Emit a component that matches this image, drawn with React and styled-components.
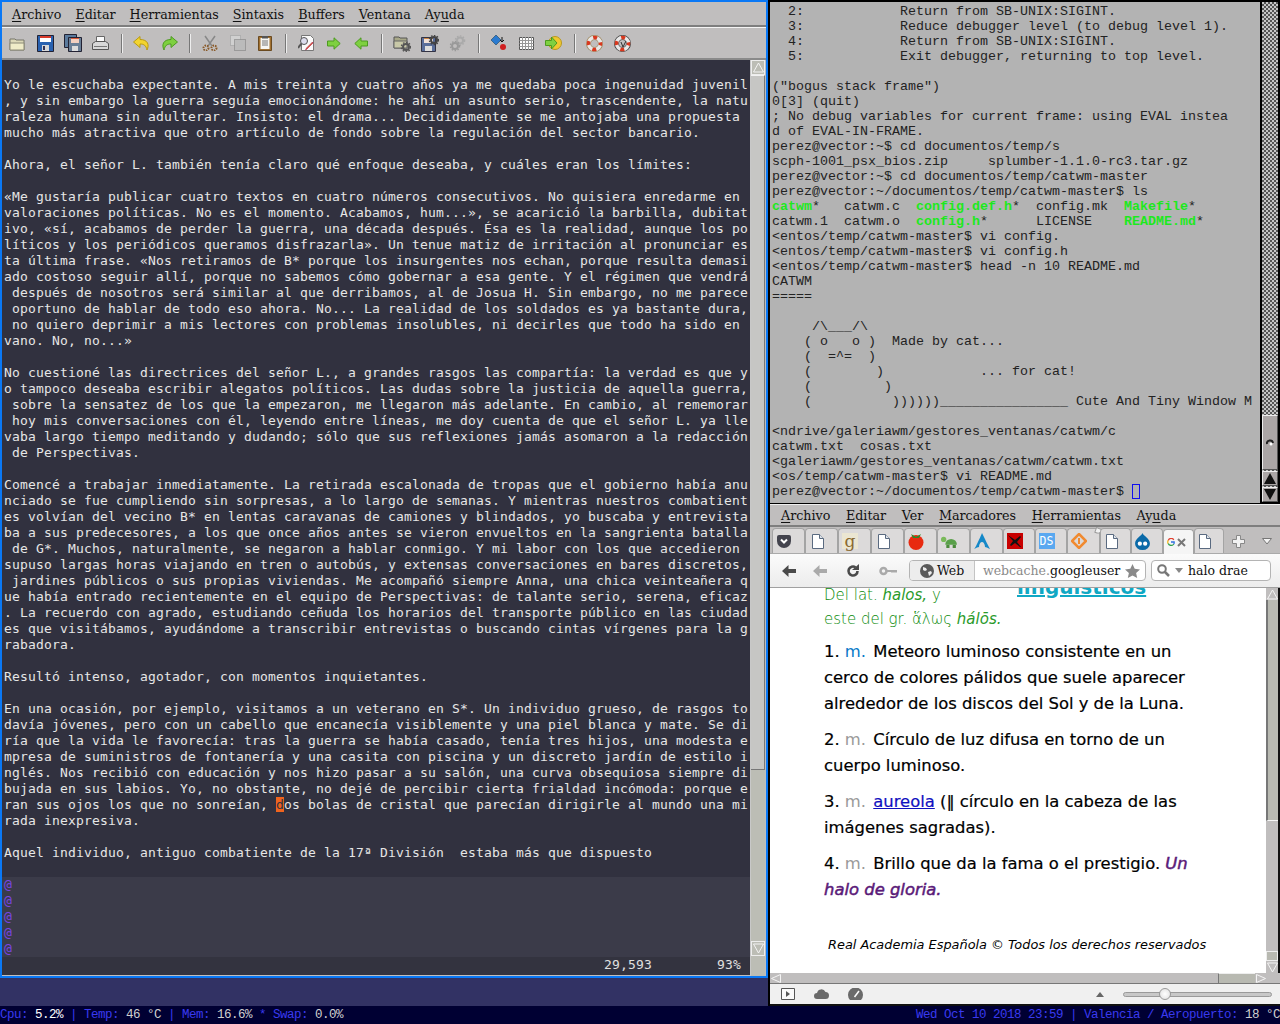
import { Fragment } from 'react'
import styled, { createGlobalStyle } from 'styled-components'

const GlobalStyle = createGlobalStyle`
  html, body { margin: 0; padding: 0; background: #000; }
  * { box-sizing: border-box; }
`

const Page = styled.div`
  width: 1280px;
  height: 1024px;
  overflow: hidden;
  display: flex;
  flex-direction: column;
`
const Desktop = styled.div`
  height: 1006px;
  display: flex;
  background: #000;
`
const LeftCol = styled.div`
  width: 768px;
  display: flex;
  flex-direction: column;
  background: #323264;
`
const RightCol = styled.div`
  width: 510px;
  margin-left: 2px;
  display: flex;
  flex-direction: column;
`

/* ---------- gvim ---------- */
const EditorWindow = styled.div`
  height: 978px;
  border: 2px solid #0a78f5;
  display: flex;
  flex-direction: column;
  background: #c0bebe;
`
const MenuBar = styled.div`
  height: ${p => p.height || 25}px;
  flex: none;
  display: flex;
  align-items: center;
  gap: ${p => p.gap || 14}px;
  padding-left: ${p => p.left || 10}px;
  padding-top: 1px;
  background: #c0bebe;
  border-bottom: 2px solid #7e7e7e;
  font: 12.7px "DejaVu Serif", serif;
  color: #111;
`
const MenuItem = styled.span`
  white-space: pre;
  u { text-underline-offset: 2px; }
`
const ToolBar = styled.div`
  height: 33px;
  flex: none;
  display: flex;
  align-items: center;
  padding-left: 2px;
  background: #c0bebe;
  border-top: 1px solid #f4f4f4;
  border-bottom: 2px solid #8a8a8a;
`
const ToolCell = styled.div`
  width: 27.6px;
  height: 24px;
  flex: none;
  display: flex;
  align-items: center;
  justify-content: center;
`
const ToolSep = styled.div`
  width: 1px;
  height: 19px;
  margin: 0 6.2px;
  flex: none;
  background: #777;
  box-shadow: 1px 0 0 #eee;
`
const EditorBody = styled.div`
  flex: 1;
  min-height: 0;
  display: flex;
`
const TextColumn = styled.div`
  flex: 1;
  display: flex;
  flex-direction: column;
  background: #31313f;
  font: 13px "DejaVu Sans Mono", monospace;
  letter-spacing: 0.174px;
  color: #e6e6e6;
`
const Prose = styled.div`
  flex: 1;
  padding: 17px 0 0 2px;
`
const ProseLine = styled.div`
  height: 16px;
  line-height: 16px;
  white-space: pre;
`
const Cursor = styled.span`
  background: #f0641e;
  color: #31313f;
`
const Tildes = styled.div`
  height: 80px;
  flex: none;
  padding-left: 2px;
  background: #3b3b49;
  color: #7a46e0;
`
const VimStatus = styled.div`
  height: 19px;
  flex: none;
  display: flex;
  background: #33333f;
  border-bottom: 1px solid #c0bebe;
  line-height: 15px;
  white-space: pre;
  color: #e0e0e0;
`
const StatusPos = styled.span`
  margin-left: ${p => p.left}px;
`
const EditorScroll = styled.div`
  width: 15px;
  flex: none;
  margin-right: 1px;
  display: flex;
  flex-direction: column;
  background: #bcbdb5;
  border-left: 1px solid #c8c8c8;
  padding-bottom: 20px;
`
const ScrollThumb = styled.div`
  height: ${p => p.height}px;
  flex: none;
  background: #c6c6c4;
  border-right: 1px solid #777;
  border-bottom: 1px solid #777;
  border-top: 1px solid #f2f2f2;
`
const ArrowButton = styled.div`
  height: 15px;
  flex: none;
  display: flex;
  align-items: center;
  justify-content: center;
  background: #bcbdb5;
  border: 1px solid #ededed;
`
const Spacer = styled.div`
  flex: 1;
`

/* ---------- xterm ---------- */
const Terminal = styled.div`
  height: 503px;
  flex: none;
  display: flex;
  background: #000;
`
const TermText = styled.div`
  width: 490px;
  height: 501px;
  margin-top: 2px;
  flex: none;
  padding: 2px 0 0 2px;
  background: #b3b3b3;
  font: 13.33px "Liberation Mono", monospace;
  color: #222;
  overflow: hidden;
`
const TermLine = styled.div`
  height: 15px;
  line-height: 15px;
  white-space: pre;
`
const Exec = styled.b`
  color: #1de81d;
`
const TermCursor = styled.span`
  display: inline-block;
  width: 8px;
  height: 15px;
  vertical-align: top;
  border: 1px solid #1010f0;
`
const TermScroll = styled.div`
  width: 16px;
  margin: 2px 0 1px 2px;
  flex: none;
  display: flex;
  flex-direction: column;
  gap: 1px;
  background: repeating-conic-gradient(#555 0 25%, #c6c6c6 0 50%) 0 0 / 4px 4px;
`
const TermThumb = styled.div`
  height: 55px;
  margin-top: auto;
  flex: none;
  display: flex;
  align-items: center;
  justify-content: center;
  background: #aba6a6;
  border: 1px solid #eee;
  border-right-color: #555;
  border-bottom-color: #555;
`
const TermArrow = styled.div`
  height: 15px;
  flex: none;
  display: flex;
  align-items: center;
  justify-content: center;
  background: #aba6a6;
  border: 1px solid #eee;
  border-right-color: #555;
  border-bottom-color: #555;
`

/* ---------- browser ---------- */
const Browser = styled.div`
  height: 502px;
  margin-top: 1px;
  flex: none;
  display: flex;
  flex-direction: column;
  border-top: 1px solid #eee;
  border-bottom: 2px solid #111;
  background: #f0f0f0;
`
const TabStrip = styled.div`
  height: 27px;
  flex: none;
  padding: 1px 0 0 2px;
  display: flex;
  align-items: flex-end;
  background: #c0bebe;
  border-bottom: 1px solid #aaa;
`
const Tab = styled.div`
  position: relative;
  width: ${p => p.width || 33}px;
  height: 25px;
  flex: none;
  display: flex;
  align-items: center;
  justify-content: center;
  gap: 2px;
  padding-right: ${p => (p.active ? 4 : 9)}px;
  background: ${p => (p.active ? '#f5f5f5' : '#dcdada')};
  border: 1px solid #a4a4a4;
  border-bottom: none;
  border-radius: 4px 4px 0 0;
  margin-bottom: ${p => (p.active ? -1 : 0)}px;
  z-index: ${p => (p.active ? 1 : 0)};
`
const TabCurl = styled.span`
  position: absolute;
  top: -1px;
  right: -3px;
  width: 7px;
  height: 6px;
  background: #f2f2f2;
  border: 1px solid #999;
  border-radius: 0 0 5px 0;
  transform: rotate(20deg);
`
const TabTools = styled.div`
  flex: 1;
  display: flex;
  align-items: center;
  justify-content: space-between;
  padding: 2px 8px 0 8px;
  height: 25px;
`
const NavBar = styled.div`
  height: 34px;
  flex: none;
  display: flex;
  align-items: center;
  padding-left: 12px;
  background: linear-gradient(#fbfbfb, #ececec);
  border-bottom: 1px solid #a0a0a0;
`
const NavButton = styled.div`
  width: ${p => p.width || 31}px;
  flex: none;
  display: flex;
  justify-content: flex-start;
`
const UrlBar = styled.div`
  width: 237px;
  height: 21px;
  margin-left: 6px;
  flex: none;
  display: flex;
  align-items: center;
  background: #fff;
  border: 1px solid #b4b4b4;
  border-radius: 4px;
  font: 12.5px "DejaVu Serif", serif;
  color: #111;
  white-space: nowrap;
  overflow: hidden;
`
const Identity = styled.div`
  width: 65px;
  height: 100%;
  flex: none;
  display: flex;
  align-items: center;
  gap: 3px;
  padding-left: 10px;
  background: #ededed;
  border-right: 1px solid #c4c4c4;
`
const UrlText = styled.div`
  flex: 1;
  padding-left: 8px;
  overflow: hidden;
  span { color: #8a8a8a; }
`
const StarSlot = styled.div`
  flex: none;
  display: flex;
  margin-right: 5px;
`
const SearchBar = styled(UrlBar)`
  width: 120px;
  margin-left: 5px;
  padding-left: 5px;
  gap: 5px;
`
const Viewport = styled.div`
  flex: 1;
  min-height: 0;
  display: flex;
  background: #fff;
`
const ArticlePane = styled.div`
  flex: 1;
  overflow: hidden;
  padding-left: 54px;
  font: 16.4px/26px "DejaVu Sans", sans-serif;
  color: #000;
`
const Etymology = styled.div`
  display: flex;
  height: 50px;
  margin-top: -5px;
  margin-bottom: 6px;
  font-size: 15px;
  color: #0a8a0a;
  font-weight: 200;
  line-height: 24px;
  i { font-weight: 400; color: #2a9a2a; }
`
const EtymText = styled.div`
  width: 193px;
  flex: none;
  white-space: nowrap;
`
const ClippedTitle = styled.div`
  margin-top: -8px;
  font: bold 20px/24px "DejaVu Sans", sans-serif;
  color: #10a8c4;
  text-decoration: underline;
  height: 24px;
`
const Definition = styled.div`
  width: 372px;
  margin-bottom: 10px;
  white-space: nowrap;
  -webkit-text-stroke: 0.2px;
`
const Abbr = styled.span`
  margin-right: 2px;
  color: ${p => p.color};
  -webkit-text-stroke: 0;
`
const Sample = styled.span`
  color: #5a1a78;
  font-style: italic;
  -webkit-text-stroke: 0.5px;
`
const Entry = styled.a`
  color: #1010c0;
  text-decoration: underline;
`
const Copyright = styled.div`
  margin: 32px 0 0 4px;
  font: italic 12.9px/20px "DejaVu Sans", sans-serif;
  white-space: nowrap;
`
const PageScroll = styled.div`
  width: 14px;
  flex: none;
  display: flex;
  flex-direction: column;
  background: #c0bebe;
  border-right: 2px solid #111;
`
const PageArrow = styled.div`
  height: 12px;
  flex: none;
  display: flex;
  align-items: center;
  justify-content: center;
`
const PageThumb = styled.div`
  height: 221px;
  flex: none;
  background: #b8b9b1;
  border-left: 2px solid #777;
  border-bottom: 1px solid #f6f6f6;
`
const EndBox = styled.div`
  height: 10px;
  flex: none;
  background: #b8b9b1;
  border: 1px solid #eee;
`
const HScroll = styled.div`
  height: 11px;
  flex: none;
  display: flex;
  background: #c0bebe;
  border-bottom: 1px solid #777;
`
const HThumb = styled.div`
  width: 37px;
  flex: none;
  margin-left: auto;
  background: #b8b9b1;
  border-left: 1px solid #777;
  border-top: 1px solid #eee;
`
const HArrow = styled.div`
  width: ${p => p.width || 12}px;
  flex: none;
  display: flex;
  align-items: center;
  justify-content: center;
`
const AddonBar = styled.div`
  height: 20px;
  flex: none;
  display: flex;
  align-items: center;
  padding: 0 8px 0 11px;
  background: #f0f0f0;
  gap: 19px;
`
const Slider = styled.div`
  position: relative;
  width: 149px;
  height: 5px;
  background: #c8c8c8;
  border: 1px solid #9a9a9a;
  border-radius: 3px;
`
const Knob = styled.div`
  position: absolute;
  left: 35px;
  top: -5px;
  width: 12px;
  height: 12px;
  border-radius: 50%;
  background: radial-gradient(#fff, #ddd);
  border: 1px solid #999;
`

/* ---------- panel ---------- */
const Panel = styled.div`
  height: 18px;
  flex: none;
  display: flex;
  justify-content: space-between;
  background: #000033;
  font: 12.5px/18px "Liberation Mono", monospace;
  letter-spacing: -0.5px;
  white-space: pre;
  color: #3a3af0;
`
const Val = styled.span`
  color: ${p => p.color || '#d0d0d0'};
`

/* ---------- icons ---------- */
const Open = () => (
  <svg width="17" height="15" viewBox="0 0 17 15"><path d="M1 3h5l1 1h8v10H1z" fill="#dcd9b8" stroke="#77766a" /><path d="M1 7h14v7H1z" fill="#efecc8" stroke="#8c8a78" /></svg>
)
const Floppy = ({ fill = '#2a62b0' }) => (
  <svg width="17" height="17" viewBox="0 0 17 17"><path d="M.5.5h16v16H.5z" fill={fill} stroke="#223" /><path d="M3 1h11v6H3z" fill="#fff" /><path d="M3 1h11v2H3z" fill="#d83a2a" /><path d="M5 10h7v6H5z" fill="#d8d8d8" /><path d="M6 11h2v4H6z" fill="#335" /></svg>
)
const SaveAll = () => (
  <svg width="18" height="18" viewBox="0 0 18 18"><path d="M.5.5h12v13H.5z" fill="#5a7a9c" stroke="#223" /><path d="M4.500 3.500h13v14h-13z" fill="#6a7f96" stroke="#223" /><path d="M7 4h8v5H7z" fill="#f2d0c0" /><path d="M7 4h8v1H7z" fill="#d85a3a" /><path d="M8 12h6v5H8z" fill="#ddd" /></svg>
)
const Printer = () => (
  <svg width="17" height="15" viewBox="0 0 17 15"><path d="M4.500.5h8v6h-8z" fill="#fafafa" stroke="#666" /><path d="M.5 7.500l3-2h10l3 2v6h-16z" fill="#d8d8d8" stroke="#555" /><path d="M2 10h13v1H2z" fill="#777" /></svg>
)
const Curved = ({ fill, stroke, flip }) => (
  <svg width="17" height="15" viewBox="0 0 17 15" style={flip ? { transform: 'scaleX(-1)' } : undefined}><path d="M7 .5L.5 6 7 11.500V8c4 0 6 1.500 7 6 2.500-5 1-10.500-7-10.500z" fill={fill} stroke={stroke} /></svg>
)
const Scissors = () => (
  <svg width="16" height="16" viewBox="0 0 16 16"><path d="M3 1l7 10M13 1L6 11" stroke="#888" strokeWidth="1.500" /><circle cx="4" cy="13" r="2.500" fill="none" stroke="#8a5a28" strokeWidth="2" strokeDasharray="1.500 1" /><circle cx="12" cy="13" r="2.500" fill="none" stroke="#8a5a28" strokeWidth="2" strokeDasharray="1.500 1" /></svg>
)
const Copy = () => (
  <svg width="16" height="16" viewBox="0 0 16 16"><path d="M.5.500h10v10h-10z" fill="#d0d0d0" stroke="#999" strokeDasharray="1 1" /><path d="M4.500 4.500h11v11h-11z" fill="#bbb" stroke="#777" strokeDasharray="1 1" /></svg>
)
const Paste = () => (
  <svg width="14" height="16" viewBox="0 0 14 16"><path d="M.5 1.500h13v14H.5z" fill="#a07030" stroke="#6a4a20" /><path d="M2.500 3h9v11h-9z" fill="#f6f6f2" /><path d="M4 1h6v2.500H4z" fill="#555" /><path d="M4 6h6M4 8h6M4 10h6" stroke="#777" /></svg>
)
const FindReplace = () => (
  <svg width="16" height="16" viewBox="0 0 16 16"><path d="M3.500.5h9l3 3v12h-12z" fill="#fafafa" stroke="#777" /><circle cx="6" cy="6" r="3.500" fill="#dde" stroke="#555" /><path d="M3.500 8.500L0 13" stroke="#555" strokeWidth="2" /><path d="M15 8l-6 6-1.500 1 1-2 6-6z" fill="#d8682a" stroke="#a04" strokeWidth=".5" /></svg>
)
const Arrow = ({ left }) => (
  <svg width="14" height="13" viewBox="0 0 14 13" style={left ? { transform: 'scaleX(-1)' } : undefined}><path d="M.5 4h6.500V.8l6.200 5.700-6.200 5.700V9H.5z" fill="#7ed040" stroke="#4c9a20" /></svg>
)
const GearMark = ({ x, y, c = '#555' }) => (
  <g transform={`translate(${x} ${y})`}><circle r="3" fill="none" stroke={c} strokeWidth="2" /><circle r="4.600" fill="none" stroke={c} strokeWidth="1.400" strokeDasharray="1.500 1.500" /></g>
)
const FolderGear = () => (
  <svg width="18" height="17" viewBox="0 0 18 17"><path d="M1 2h5l1 1h7v10H1z" fill="#a8a888" stroke="#555" /><path d="M1 6h13v7H1z" fill="#c8c8a8" stroke="#666" /><GearMark x={13} y={12} /></svg>
)
const FloppyGear = () => (
  <svg width="18" height="17" viewBox="0 0 18 17"><path d="M.5 2.500h14v14H.5z" fill="#5a6e9a" stroke="#334" /><path d="M3 3h9v5H3z" fill="#f0e0d8" /><path d="M3 3h9v1H3z" fill="#c84" /><path d="M4 11h7v5H4z" fill="#ddd" /><GearMark x={13} y={5} c="#444" /></svg>
)
const Gears = () => (
  <svg width="17" height="17" viewBox="0 0 17 17"><GearMark x={11} y={5.500} c="#aaa" /><GearMark x={6} y={11} c="#999" /></svg>
)
const MakeIcon = () => (
  <svg width="16" height="16" viewBox="0 0 16 16"><path d="M5 0l5 5-5 5-5-5z" fill="#2a7ad0" stroke="#134" strokeWidth=".5" /><path d="M11 2v5M9 5l2 2 2-2" stroke="#111" fill="none" /><circle cx="12" cy="12" r="3" fill="#d02020" /></svg>
)
const Grid = () => (
  <svg width="15" height="13" viewBox="0 0 15 13"><path d="M.5.500h14v12H.5z" fill="#fff" stroke="#555" /><path d="M.5 3.500h14M.5 6.500h14M.5 9.500h14M3.500 0v13M6.500 0v13M9.500 0v13M12.500 0v13" stroke="#999" /></svg>
)
const Goto = () => (
  <svg width="17" height="14" viewBox="0 0 17 14"><circle cx="10" cy="7" r="6.500" fill="#f0c830" stroke="#b89820" /><path d="M.5 4.500h6V1l5.500 6-5.500 6V9.500h-6z" fill="#7ed040" stroke="#4c9a20" /></svg>
)
const Buoy = ({ help }) => (
  <svg width="17" height="17" viewBox="0 0 17 17"><circle cx="8.500" cy="8.500" r="6" fill="none" stroke={help ? '#444' : '#a08a60'} strokeWidth="5" /><circle cx="8.500" cy="8.500" r="6" fill="none" stroke="#e8e8e8" strokeWidth="3.500" /><circle cx="8.500" cy="8.500" r="6" fill="none" stroke="#d8381e" strokeWidth="3.500" strokeDasharray="4 5.400" strokeDashoffset="2" />{help && <path d="M7 7l2 5 3-6" stroke="#333" fill="none" />}</svg>
)
const ArrowUpOutline = ({ down }) => (
  <svg width="11" height="11" viewBox="0 0 11 11" style={down ? { transform: 'scaleY(-1)' } : undefined}><path d="M5.500 1L.5 10h10z" fill="none" stroke="#f4f4f4" /></svg>
)
const ArrowSide = ({ right }) => (
  <svg width="10" height="9" viewBox="0 0 10 9" style={right ? { transform: 'scaleX(-1)' } : undefined}><path d="M.5 4.500L9.500.5v8z" fill="none" stroke="#f4f4f4" /></svg>
)
const BlackArrow = ({ down }) => (
  <svg width="12" height="11" viewBox="0 0 12 11" style={down ? { transform: 'scaleY(-1)' } : undefined}><path d="M6 0l6 11H0z" fill="#111" /></svg>
)
const PageIcon = () => (
  <svg width="13" height="15" viewBox="0 0 13 15"><path d="M1.500.5h7l4 4v10h-11z" fill="#fff" stroke="#5a6a80" /><path d="M8.500.5v4h4" fill="#dfe4ea" stroke="#5a6a80" /></svg>
)
const Pocket = () => (
  <svg width="14" height="13" viewBox="0 0 14 13"><path d="M0 2a2 2 0 012-2h10a2 2 0 012 2v4a7 7 0 01-14 0z" fill="#44444e" /><path d="M4 4.500l3 3 3-3" stroke="#fff" strokeWidth="2" fill="none" /></svg>
)
const Square = styled.div`
  width: ${p => p.size || 16}px;
  height: ${p => p.size || 16}px;
  display: flex;
  align-items: center;
  justify-content: center;
  background: ${p => p.bg};
  color: ${p => p.color || '#fff'};
  font: ${p => p.font || '13px "DejaVu Sans", sans-serif'};
`
const Tomato = () => (
  <svg width="16" height="17" viewBox="0 0 16 17"><circle cx="8" cy="9.500" r="7.500" fill="#e82a10" /><path d="M3 1l5 3 5-3-2 4H5z" fill="#2a8a2a" /></svg>
)
const Turtle = () => (
  <svg width="17" height="14" viewBox="0 0 16 13"><path d="M4 10a5.500 5.500 0 0111 0z" fill="#5aa04a" /><circle cx="2.500" cy="5" r="2.500" fill="#7aba5a" /><path d="M5 10h3v3H5zM11 10h3v3h-3z" fill="#4a8a3a" /></svg>
)
const ArchLogo = () => (
  <svg width="16" height="16" viewBox="0 0 16 16"><path d="M8 0C6.800 3 5.500 6 2.500 12 .8 15.500.3 16 0 16c2.500-1.300 4-2 5-2 0-3 1.500-5 3-5s3 2 3 5c1 0 2.500.7 5 2-2-3.500-5-10-8-16z" fill="#1588c8" /></svg>
)
const Plane = () => (
  <Square bg="#c80000"><svg width="15" height="14" viewBox="0 0 15 14"><path d="M1 1l7 5 5-4 1 1-4 5 4 5-1 0-5-4-4 3-1-1 3-4z" fill="#111" /></svg></Square>
)
const Diamond = () => (
  <svg width="16" height="16" viewBox="0 0 16 16"><path d="M8 1l7 7-7 7-7-7z" fill="none" stroke="#f08a30" strokeWidth="2.500" /><path d="M8 5v6" stroke="#f08a30" strokeWidth="2" /></svg>
)
const Drupal = () => (
  <svg width="15" height="17" viewBox="0 0 14 16"><path d="M7 0c1 3 7 5 7 10a7 6 0 01-14 0C0 5 6 3 7 0z" fill="#0a6aa8" /><circle cx="4.500" cy="10" r="2" fill="#fff" /><circle cx="9.500" cy="10" r="2" fill="#fff" /></svg>
)
const GoogleG = () => (
  <svg width="8" height="8" viewBox="0 0 10 10"><path d="M8.500 2.200A4 4 0 001.500 3" fill="none" stroke="#e04030" strokeWidth="1.600" /><path d="M1.500 3a4 4 0 000 4" fill="none" stroke="#f0b820" strokeWidth="1.600" /><path d="M1.500 7a4 4 0 007 .5" fill="none" stroke="#30a050" strokeWidth="1.600" /><path d="M8.500 7.500A4 4 0 009 5H5" fill="none" stroke="#3070e0" strokeWidth="1.600" /></svg>
)
const CloseX = () => (
  <svg width="9" height="9" viewBox="0 0 9 9"><path d="M1 1l7 7M8 1L1 8" stroke="#777" strokeWidth="2" /></svg>
)
const Plus = () => (
  <svg width="13" height="13" viewBox="0 0 13 13"><path d="M4.500.5h4v4h4v4h-4v4h-4v-4h-4v-4h4z" fill="#f2f2f2" stroke="#888" /></svg>
)
const Chevron = () => (
  <svg width="10" height="7" viewBox="0 0 10 7"><path d="M.5.500h9L5 6z" fill="#f2f2f2" stroke="#777" /></svg>
)
const Back = ({ fill = '#4a4a4a' }) => (
  <svg width="14" height="12" viewBox="0 0 14 12"><path d="M6.500 0L0 6l6.500 6V8H14V4H6.500z" fill={fill} /></svg>
)
const Reload = () => (
  <svg width="14" height="14" viewBox="0 0 14 14"><path d="M11.500 7a4.500 4.500 0 11-2-3.700" fill="none" stroke="#4a4a4a" strokeWidth="2.600" /><path d="M6 6h7V0z" fill="#4a4a4a" /></svg>
)
const KeyIcon = () => (
  <svg width="18" height="10" viewBox="0 0 18 10"><circle cx="4.500" cy="5" r="3" fill="none" stroke="#aaa" strokeWidth="2.500" /><path d="M8 4h10v2l-1 1-1-1-1 1-1-1-1 1-1-1H8z" fill="#aaa" /></svg>
)
const Globe = () => (
  <svg width="14" height="14" viewBox="0 0 14 14"><circle cx="7" cy="7" r="7" fill="#5a5a5a" /><path d="M3 3l3 1 1 2-2 1-2-1zM8 8l3-1 1 2-3 3z" fill="#eee" /></svg>
)
const Star = () => (
  <svg width="15" height="14" viewBox="0 0 15 14"><path d="M7.500 0l2.200 4.800 5.300.6-3.900 3.500 1.100 5.100-4.700-2.600L2.800 14l1.100-5.100L0 5.400l5.300-.6z" fill="#8a8a8a" /></svg>
)
const Lens = () => (
  <svg width="13" height="13" viewBox="0 0 13 13"><circle cx="5" cy="5" r="3.800" fill="none" stroke="#777" strokeWidth="2" /><path d="M8 8l4 4" stroke="#777" strokeWidth="2.500" /></svg>
)
const Caret = ({ fill = '#888', up }) => (
  <svg width="8" height="5" viewBox="0 0 8 5" style={up ? { transform: 'scaleY(-1)' } : undefined}><path d="M0 0h8L4 5z" fill={fill} /></svg>
)
const PanelBox = () => (
  <svg width="14" height="12" viewBox="0 0 14 12"><path d="M.5.500h13v11H.5z" fill="#fafafa" stroke="#555" /><path d="M5 3l4 3-4 3z" fill="#555" /></svg>
)
const Cloud = () => (
  <svg width="15" height="10" viewBox="0 0 15 10"><path d="M3 10a3 3 0 010-6 4.500 4.500 0 018.500-1 3.500 3.500 0 010 7z" fill="#6a6a6a" /></svg>
)
const Gauge = () => (
  <svg width="15" height="12" viewBox="0 0 15 12"><path d="M2 12A7.500 7.500 0 1113 12z" fill="#6a6a6a" /><path d="M6.500 9L11 3" stroke="#fafafa" strokeWidth="1.500" /></svg>
)
const Spiral = () => (
  <svg width="8" height="8" viewBox="0 0 8 8"><path d="M1 5a3 3 0 016-1" fill="none" stroke="#222" strokeWidth="2" /><circle cx="5" cy="5" r="1.500" fill="#fff" /></svg>
)

/* ---------- content ---------- */
const proseLines = [
  'Yo le escuchaba expectante. A mis treinta y cuatro años ya me quedaba poca ingenuidad juvenil',
  ', y sin embargo la guerra seguía emocionándome: he ahí un asunto serio, trascendente, la natu',
  'raleza humana sin adulterar. Insisto: el drama... Decididamente se me antojaba una propuesta',
  'mucho más atractiva que otro artículo de fondo sobre la regulación del sector bancario.',
  '',
  'Ahora, el señor L. también tenía claro qué enfoque deseaba, y cuáles eran los límites:',
  '',
  '«Me gustaría publicar cuatro textos en cuatro números consecutivos. No quisiera enredarme en',
  'valoraciones políticas. No es el momento. Acabamos, hum...», se acarició la barbilla, dubitat',
  'ivo, «sí, acabamos de perder la guerra, una década después. Ésa es la realidad, aunque los po',
  'líticos y los periódicos queramos disfrazarla». Un tenue matiz de irritación al pronunciar es',
  'ta última frase. «Nos retiramos de B* porque los insurgentes nos echan, porque resulta demasi',
  'ado costoso seguir allí, porque no sabemos cómo gobernar a esa gente. Y el régimen que vendrá',
  ' después de nosotros será similar al que derribamos, al de Josua H. Sin embargo, no me parece',
  ' oportuno de hablar de todo eso ahora. No... La realidad de los soldados es ya bastante dura,',
  ' no quiero deprimir a mis lectores con problemas insolubles, ni decirles que todo ha sido en',
  'vano. No, no...»',
  '',
  'No cuestioné las directrices del señor L., a grandes rasgos las compartía: la verdad es que y',
  'o tampoco deseaba escribir alegatos políticos. Las dudas sobre la justicia de aquella guerra,',
  ' sobre la sensatez de los que la empezaron, me llegaron más adelante. En cambio, al rememorar',
  ' hoy mis conversaciones con él, leyendo entre líneas, me doy cuenta de que el señor L. ya lle',
  'vaba largo tiempo meditando y dudando; sólo que sus reflexiones jamás asomaron a la redacción',
  ' de Perspectivas.',
  '',
  'Comencé a trabajar inmediatamente. La retirada escalonada de tropas que el gobierno había anu',
  'nciado se fue cumpliendo sin sorpresas, a lo largo de semanas. Y mientras nuestros combatient',
  'es volvían del vecino B* en lentas caravanas de camiones y blindados, yo buscaba y entrevista',
  'ba a sus predecesores, a los que once años antes se vieron envueltos en la sangrienta batalla',
  ' de G*. Muchos, naturalmente, se negaron a hablar conmigo. Y mi labor con los que accedieron',
  'supuso largas horas viajando en tren o autobús, y extensas conversaciones en bares discretos,',
  ' jardines públicos o sus propias viviendas. Me acompañó siempre Anna, una chica veinteañera q',
  'ue había entrado recientemente en el equipo de Perspectivas: de talante serio, serena, eficaz',
  '. La recuerdo con agrado, estudiando ceñuda los horarios del transporte público en las ciudad',
  'es que visitábamos, ayudándome a transcribir entrevistas o buscando cintas vírgenes para la g',
  'rabadora.',
  '',
  'Resultó intenso, agotador, con momentos inquietantes.',
  '',
  'En una ocasión, por ejemplo, visitamos a un veterano en S*. Un individuo grueso, de rasgos to',
  'davía jóvenes, pero con un cabello que encanecía visiblemente y una piel blanca y mate. Se di',
  'ría que la vida le favorecía: tras la guerra se había casado, tenía tres hijos, una modesta e',
  'mpresa de suministros de fontanería y una casita con piscina y un discreto jardín de estilo i',
  'nglés. Nos recibió con educación y nos hizo pasar a su salón, una curva obsequiosa siempre di',
  'bujada en sus labios. Yo, no obstante, no dejé de percibir cierta frialdad incómoda: porque e',
]

const termTop = [
  '  2:            Return from SB-UNIX:SIGINT.',
  '  3:            Reduce debugger level (to debug level 1).',
  '  4:            Return from SB-UNIX:SIGINT.',
  '  5:            Exit debugger, returning to top level.',
  '',
  '("bogus stack frame")',
  '0[3] (quit)',
  '; No debug variables for current frame: using EVAL instea',
  'd of EVAL-IN-FRAME.',
  'perez@vector:~$ cd documentos/temp/s',
  'scph-1001_psx_bios.zip     splumber-1.1.0-rc3.tar.gz',
  'perez@vector:~$ cd documentos/temp/catwm-master',
  'perez@vector:~/documentos/temp/catwm-master$ ls',
]
const termBottom = [
  '<entos/temp/catwm-master$ vi config.',
  '<entos/temp/catwm-master$ vi config.h',
  '<entos/temp/catwm-master$ head -n 10 README.md',
  'CATWM',
  '=====',
  '',
  '     /\\___/\\',
  '    ( o   o )  Made by cat...',
  '    (  =^=  )',
  '    (        )            ... for cat!',
  '    (         )',
  '    (          ))))))________________ Cute And Tiny Window M',
  '',
  '<ndrive/galeriawm/gestores_ventanas/catwm/c',
  'catwm.txt  cosas.txt',
  '<galeriawm/gestores_ventanas/catwm/catwm.txt',
  '<os/temp/catwm-master$ vi README.md',
]

const Menu = ({ items }) => items.map(([key, rest, before = '']) => (
  <MenuItem key={key + rest}>{before}<u>{key}</u>{rest}</MenuItem>
))

const toolGroups = [
  [<Open />, <Floppy />, <SaveAll />, <Printer />],
  [<Curved fill="#f2d430" stroke="#b89a10" />, <Curved fill="#7ed040" stroke="#4c9a20" flip />],
  [<Scissors />, <Copy />, <Paste />],
  [<FindReplace />, <Arrow />, <Arrow left />],
  [<FolderGear />, <FloppyGear />, <Gears />],
  [<MakeIcon />, <Grid />, <Goto />],
  [<Buoy />, <Buoy help />],
]

const App = () => (
  <Page>
    <GlobalStyle />
    <Desktop>
      <LeftCol>
        <EditorWindow>
          <MenuBar>
            <Menu items={[['A', 'rchivo'], ['E', 'ditar'], ['H', 'erramientas'], ['S', 'intaxis'], ['B', 'uffers'], ['V', 'entana'], ['u', 'da', 'Ay']]} />
          </MenuBar>
          <ToolBar>
            {toolGroups.map((group, i) => (
              <Fragment key={i}>
                {i > 0 && <ToolSep />}
                {group.map((icon, j) => <ToolCell key={j}>{icon}</ToolCell>)}
              </Fragment>
            ))}
          </ToolBar>
          <EditorBody>
            <TextColumn>
              <Prose>
                {proseLines.map((line, i) => <ProseLine key={i}>{line}</ProseLine>)}
                <ProseLine>ran sus ojos los que no sonreían, <Cursor>d</Cursor>os bolas de cristal que parecían dirigirle al mundo una mi</ProseLine>
                <ProseLine>rada inexpresiva.</ProseLine>
                <ProseLine />
                <ProseLine>Aquel individuo, antiguo combatiente de la 17ª División  estaba más que dispuesto</ProseLine>
              </Prose>
              <Tildes>
                {[0, 1, 2, 3, 4].map(i => <ProseLine key={i}>@</ProseLine>)}
              </Tildes>
              <VimStatus>
                <StatusPos left={602}>29,593</StatusPos>
                <StatusPos left={65}>93%</StatusPos>
              </VimStatus>
            </TextColumn>
            <EditorScroll>
              <ArrowButton><ArrowUpOutline /></ArrowButton>
              <ScrollThumb height={695} />
              <Spacer />
              <ArrowButton><ArrowUpOutline down /></ArrowButton>
            </EditorScroll>
          </EditorBody>
        </EditorWindow>
      </LeftCol>
      <RightCol>
        <Terminal>
          <TermText>
            {termTop.map((line, i) => <TermLine key={i}>{line}</TermLine>)}
            <TermLine><Exec>catwm</Exec>*   catwm.c  <Exec>config.def.h</Exec>*  config.mk  <Exec>Makefile</Exec>*</TermLine>
            <TermLine>catwm.1  catwm.o  <Exec>config.h</Exec>*      LICENSE    <Exec>README.md</Exec>*</TermLine>
            {termBottom.map((line, i) => <TermLine key={i}>{line}</TermLine>)}
            <TermLine>perez@vector:~/documentos/temp/catwm-master$ <TermCursor /></TermLine>
          </TermText>
          <TermScroll>
            <TermThumb><Spiral /></TermThumb>
            <TermArrow><BlackArrow /></TermArrow>
            <TermArrow><BlackArrow down /></TermArrow>
          </TermScroll>
        </Terminal>
        <Browser>
          <MenuBar left={11} height={22} gap={15.6}>
            <Menu items={[['A', 'rchivo'], ['E', 'ditar'], ['V', 'er'], ['M', 'arcadores'], ['H', 'erramientas'], ['u', 'da', 'Ay']]} />
          </MenuBar>
          <TabStrip>
            <Tab><Pocket /></Tab>
            <Tab><PageIcon /></Tab>
            <Tab><Square bg="#ebe6d2" color="#8a6a30" font='17px "DejaVu Serif", serif'>g</Square></Tab>
            <Tab><PageIcon /></Tab>
            <Tab><Tomato /></Tab>
            <Tab><Turtle /></Tab>
            <Tab><ArchLogo /></Tab>
            <Tab width={32}><Plane /></Tab>
            <Tab width={32}><Square bg="#5aa8f0" font='11.500px "DejaVu Sans Mono", monospace'>DS</Square></Tab>
            <Tab><Diamond /><TabCurl /></Tab>
            <Tab width={31}><PageIcon /></Tab>
            <Tab width={32}><Drupal /></Tab>
            <Tab active width={31}><GoogleG /><CloseX /></Tab>
            <Tab width={30}><PageIcon /></Tab>
            <TabTools><Plus /><Chevron /></TabTools>
          </TabStrip>
          <NavBar>
            <NavButton><Back /></NavButton>
            <NavButton width={33}><Back fill="#aaa" /></NavButton>
            <NavButton width={33}><Reload /></NavButton>
            <NavButton width={24}><KeyIcon /></NavButton>
            <UrlBar>
              <Identity><Globe />Web</Identity>
              <UrlText><span>webcache.</span>googleuser</UrlText>
              <StarSlot><Star /></StarSlot>
            </UrlBar>
            <SearchBar><Lens /><Caret />halo drae</SearchBar>
          </NavBar>
          <Viewport>
            <ArticlePane>
              <Etymology>
                <EtymText>
                  Del lat. <i>halos,</i> y<br />
                  este del gr. ἅλως <i>hálōs.</i>
                </EtymText>
                <ClippedTitle>lingüísticos</ClippedTitle>
              </Etymology>
              <Definition>
                1. <Abbr color="#0a7ac8">m.</Abbr> Meteoro luminoso consistente en un<br />
                cerco de colores pálidos que suele aparecer<br />
                alrededor de los discos del Sol y de la Luna.
              </Definition>
              <Definition>
                2. <Abbr color="#9a9a9a">m.</Abbr> Círculo de luz difusa en torno de un<br />
                cuerpo luminoso.
              </Definition>
              <Definition>
                3. <Abbr color="#9a9a9a">m.</Abbr> <Entry>aureola</Entry> (‖ círculo en la cabeza de las<br />
                imágenes sagradas).
              </Definition>
              <Definition>
                4. <Abbr color="#9a9a9a">m.</Abbr> Brillo que da la fama o el prestigio. <Sample>Un</Sample><br />
                <Sample>halo de gloria.</Sample>
              </Definition>
              <Copyright>Real Academia Española © Todos los derechos reservados</Copyright>
            </ArticlePane>
            <PageScroll>
              <PageArrow><ArrowUpOutline /></PageArrow>
              <PageThumb />
              <Spacer />
              <EndBox />
              <PageArrow><ArrowUpOutline down /></PageArrow>
            </PageScroll>
          </Viewport>
          <HScroll>
            <HArrow><ArrowSide /></HArrow>
            <HThumb />
            <HArrow><ArrowSide right /></HArrow>
            <HArrow width={13} />
          </HScroll>
          <AddonBar>
            <PanelBox />
            <Cloud />
            <Gauge />
            <Spacer />
            <Caret fill="#666" up />
            <Slider><Knob /></Slider>
          </AddonBar>
        </Browser>
      </RightCol>
    </Desktop>
    <Panel>
      <span>Cpu: <Val color="#fff">5.2%</Val> | Temp: <Val>46 °C</Val> | Mem: <Val>16.6%</Val> * Swap: <Val>0.0%</Val></span>
      <span>Wed Oct 10 2018 23:59 | Valencia / Aeropuerto: <Val>18 °C</Val></span>
    </Panel>
  </Page>
)

export default App
